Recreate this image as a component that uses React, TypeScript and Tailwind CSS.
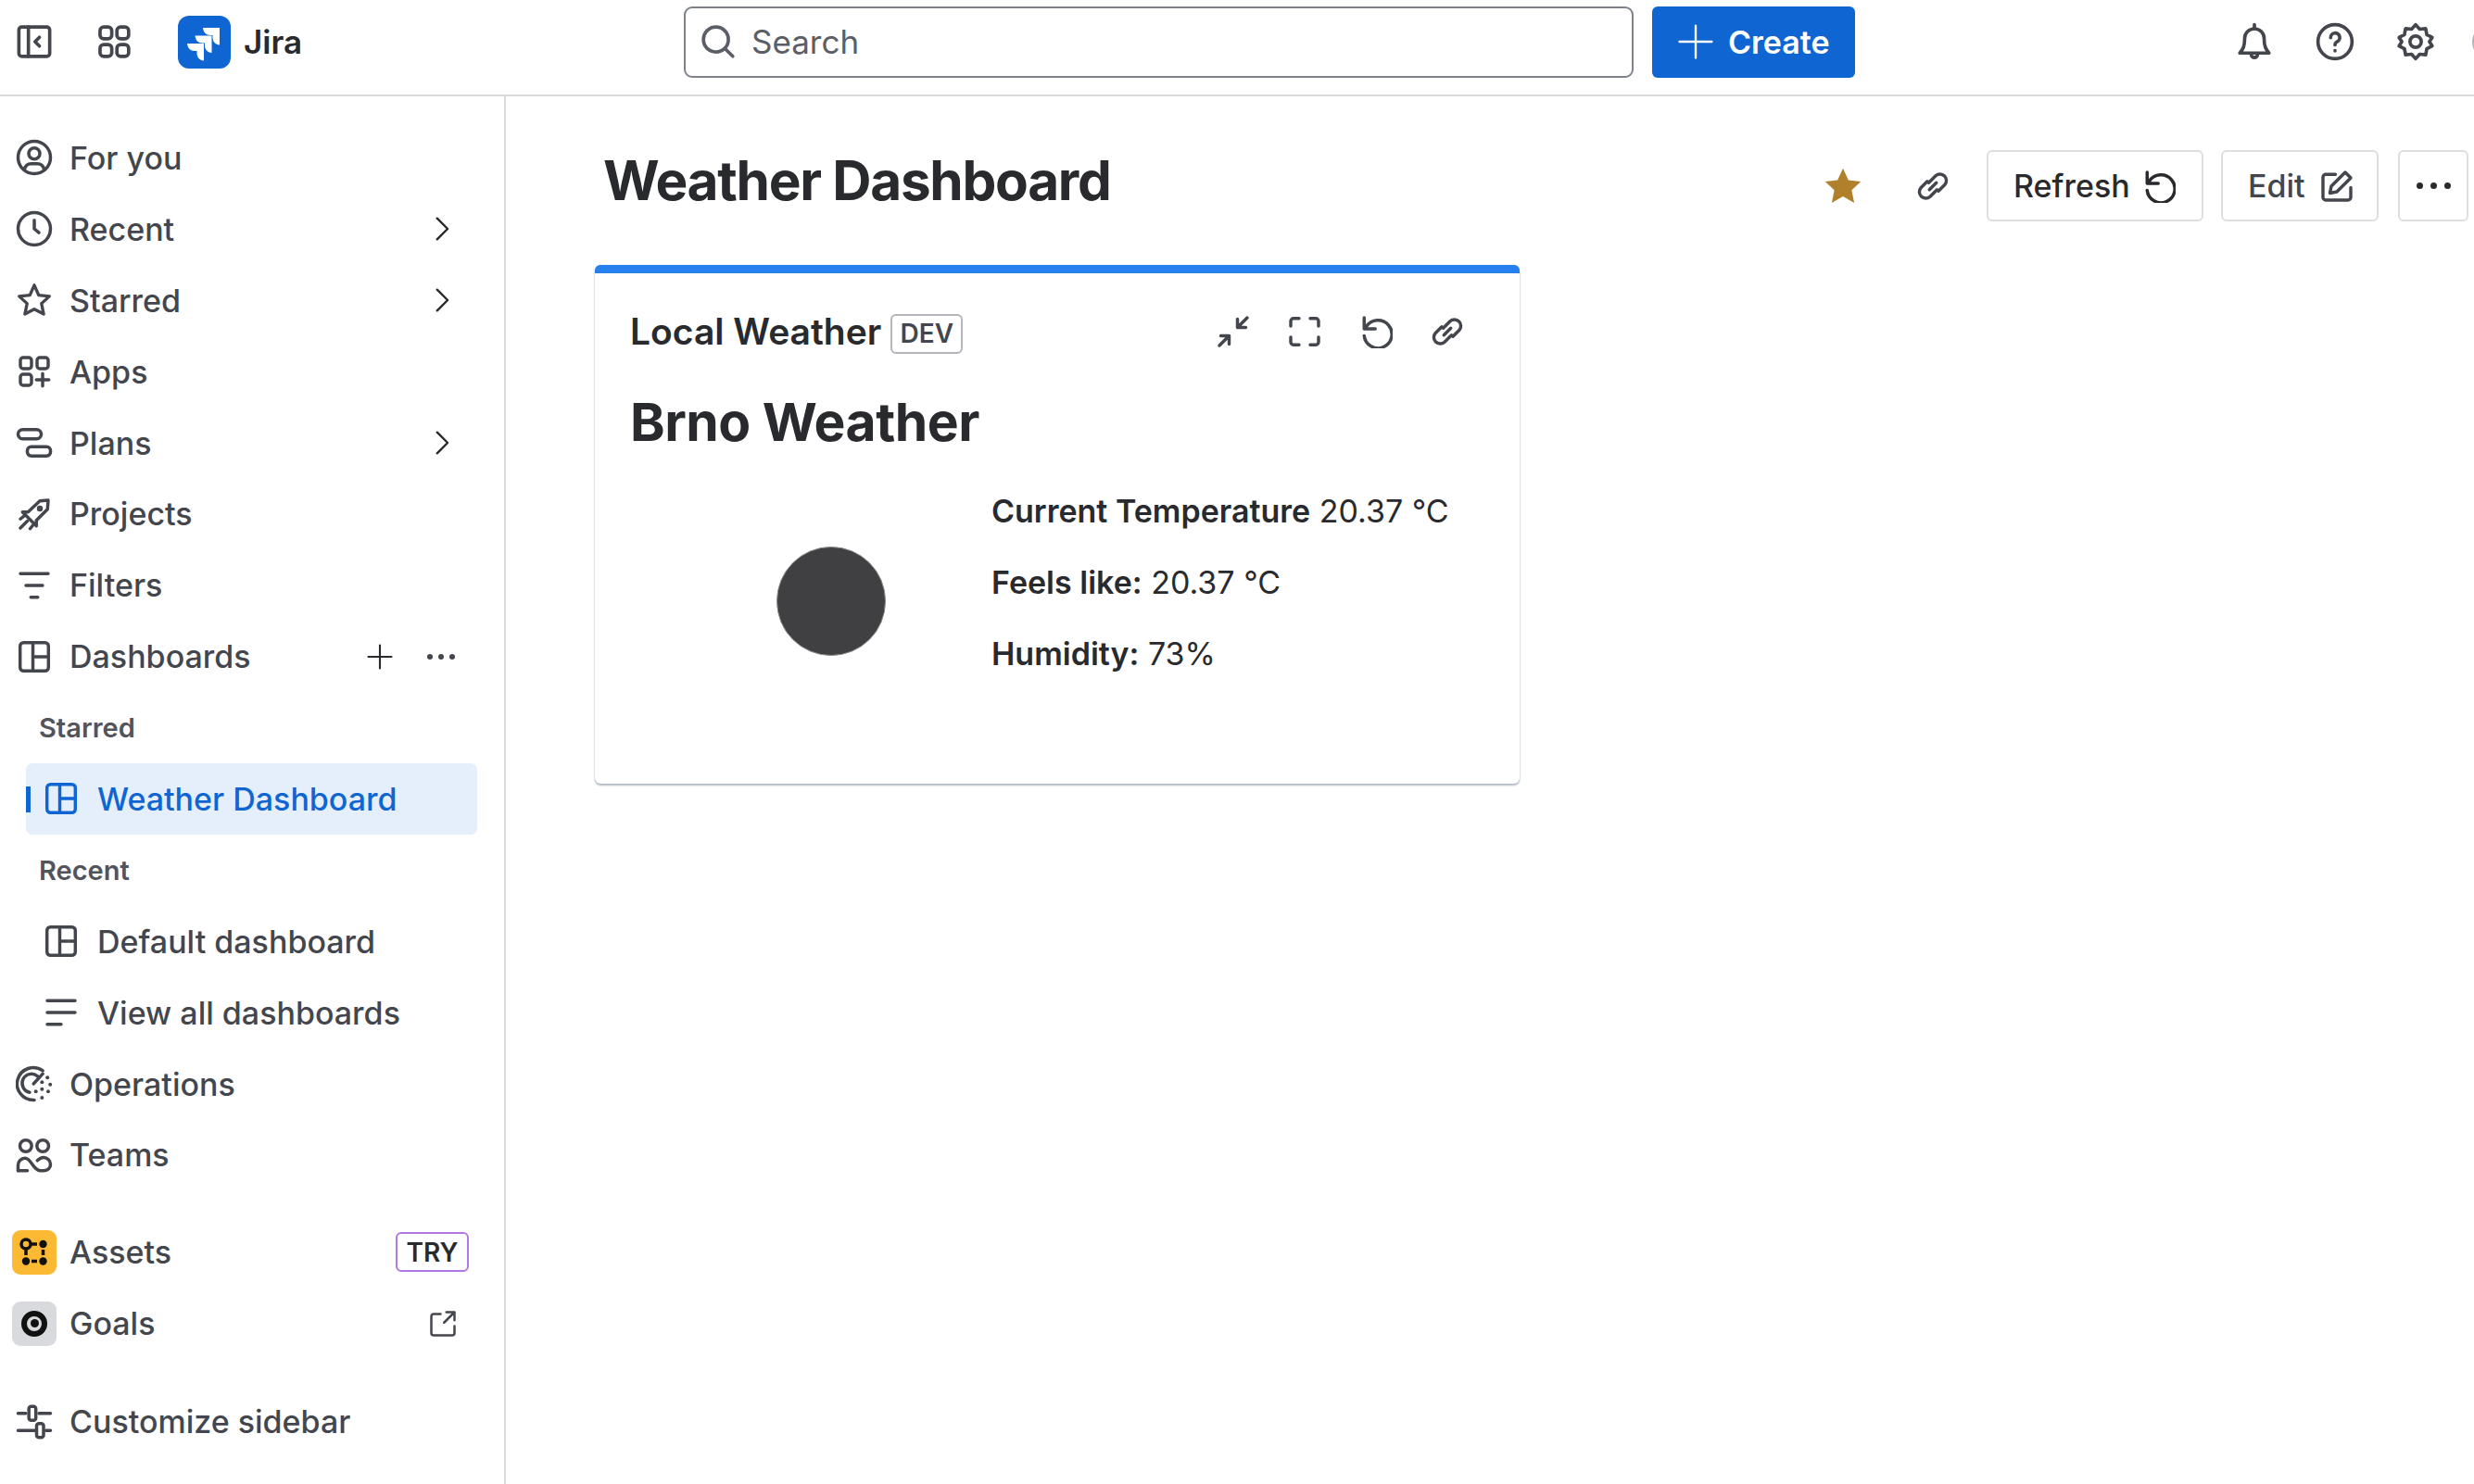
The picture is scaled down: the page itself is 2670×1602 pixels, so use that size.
import React from "react";

const I = ({ children, size = 36, vb = 24, sw = 2.3, className = "" }: { children: React.ReactNode; size?: number; vb?: number; sw?: number; className?: string }) => (
  <svg width={size} height={size} viewBox={`0 0 ${vb} ${vb}`} fill="none" stroke="currentColor" strokeWidth={sw} strokeLinecap="round" strokeLinejoin="round" className={`shrink-0 ${className}`}>
    {children}
  </svg>
);

const big = "-ml-[2px]";

const Chevron = () => (
  <I size={34} sw={1.7} className="text-[#292a2e]"><path d="M9 4l8 8-8 8" /></I>
);
const User = () => (
  <I size={40} sw={2.1} className={big}><circle cx="12" cy="12" r="10.500" /><circle cx="12" cy="9.500" r="3.600" /><path d="M5.500 20c.6-2.600 2.500-4 4.500-4h4c2 0 3.900 1.400 4.500 4" /></I>
);
const Clock = () => (
  <I size={40} sw={2.1} className={big}><circle cx="12" cy="12" r="10.500" /><path d="M12 6.500V12l3 2.500" /></I>
);
const Star = () => (
  <I size={38} sw={2.1} className="-ml-[1px]"><path d="M12 1.800l3 6.800 7.300.8-5.400 4.900 1.500 7.200L12 18.100l-6.400 3.400 1.500-7.200L1.700 9.400 9 8.600z" /></I>
);
const AppsI = () => (
  <I><rect x="2" y="2" width="8" height="8" rx="2" /><rect x="14" y="2" width="8" height="8" rx="2" /><rect x="2" y="14" width="8" height="8" rx="2" /><path d="M18 13.500v9M13.500 18h9" /></I>
);
const PlansI = () => (
  <I size={40} sw={2.1} className={big}><rect x="1.500" y="3.500" width="15" height="6" rx="3" /><rect x="7.500" y="14.500" width="15" height="6" rx="2.500" /></I>
);
const Rocket = () => (
  <I><path d="M22 2l-6 .5-8.500 8H3.500l3.500 3.500 3 3 3.500 3.500v-4l8-8z" /><circle cx="16" cy="8" r="1" /><path d="M2 22l5-5M2 15.500l2.500-2M9 22.500l2-2.500" /></I>
);
const FilterI = () => (
  <I><path d="M2 3.500h20M6 12h12M9.500 20.500h5" /></I>
);
const Board = () => (
  <I><rect x="1.800" y="1.800" width="20.400" height="20.400" rx="2.500" /><path d="M11 2v20M11 12h11" /></I>
);
const Lines = () => (
  <I><path d="M2 3.500h20M2 12h20M2 20.500h10" /></I>
);
const Ops = () => (
  <I size={40} sw={2.1} className={big}><path d="M17.500 3.500A10.500 10.500 0 1 0 12 22.500" /><path d="M14 7A6 6 0 1 0 9 17.500" /><path d="M17.500 5.500L11.500 12" />
    <g fill="currentColor" stroke="none"><circle cx="20.500" cy="8" r="1.200" /><circle cx="22.300" cy="12.500" r="1.200" /><circle cx="21" cy="17" r="1.200" /><circle cx="17" cy="21" r="1.200" /><circle cx="17" cy="11" r="1.200" /><circle cx="17" cy="15.500" r="1.200" /><circle cx="13" cy="17" r="1.200" /></g>
  </I>
);
const Teams = () => (
  <I size={40} sw={2.1} className={big}><circle cx="6.500" cy="6" r="3.800" /><circle cx="17.500" cy="6" r="3.800" /><path d="M1.500 22v-3.500a4.500 4.500 0 0 1 4.500-4.500c4 0 5 7.500 9.500 8h3a4 4 0 0 0 4-4 4.500 4.500 0 0 0-4.500-4.500c-2 0-3 1-4 2" /><path d="M1.500 22h6" /></I>
);
const Sliders = () => (
  <I size={40} sw={2.1} className={big}><path d="M1.500 6.500h5M15 6.500h7.500M1.500 17.500h11M19.500 17.500h3" /><rect x="8.500" y="2" width="4.500" height="9" rx="1.500" /><rect x="13.500" y="13" width="4.500" height="9" rx="1.500" /></I>
);
const LinkI = ({ size = 36 }: { size?: number }) => (
  <I size={size}><path d="M9 9.500l5-5a4.600 4.600 0 0 1 6.500 6.500L16 15.500" /><path d="M15 14.500l-5 5a4.600 4.600 0 0 1-6.500-6.500L8 8.500" /><path d="M9.500 14.500l5-5" /></I>
);
const Undo = ({ size = 36 }: { size?: number }) => (
  <I size={size}><path d="M3.500 2v8h8" /><path d="M5 8.500A10 10 0 1 1 3.500 15" /></I>
);

const rowBase = "flex items-center h-[76.9px] shrink-0";

const Row = ({ icon, label, right }: { icon: React.ReactNode; label: string; right?: React.ReactNode }) => (
  <div className={`${rowBase} pl-[19px] pr-[51px] text-[#44464e]`}>
    <span className="w-[56px] flex">{icon}</span>
    <span className="flex-1 font-medium">{label}</span>
    {right}
  </div>
);

const Heading = ({ label }: { label: string }) => (
  <div className={`${rowBase} pl-[42px] text-[29px] font-semibold text-[#52545c]`}>{label}</div>
);

const SubRow = ({ icon, label }: { icon: React.ReactNode; label: string }) => (
  <div className={`${rowBase} pl-[48px] text-[#44464e]`}>
    <span className="w-[57px] flex">{icon}</span>
    <span className="font-medium">{label}</span>
  </div>
);

export default function App() {
  return (
    <div className="w-[2670px] h-[1602px] overflow-hidden bg-white flex flex-col text-[#292a2e] text-[34px] font-['Inter',_'Liberation_Sans',_sans-serif]">
      <header className="h-[104px] shrink-0 border-b-2 border-[#d9d9d9] flex items-center">
        <div className="w-[738px] shrink-0 flex items-center pl-[18px] text-[#44464e] -mt-[12px]">
          <I size={38}><rect x="1.500" y="2" width="21" height="20" rx="2" /><path d="M8 2v20M15.500 9l-3 3 3 3" /></I>
          <span className="ml-[48px] flex">
            <I size={38}><rect x="2.500" y="2" width="8" height="8" rx="2.500" /><rect x="14" y="2" width="8" height="8" rx="2.500" /><rect x="2.500" y="14" width="8" height="8" rx="2.500" /><rect x="14" y="14" width="8" height="8" rx="2.500" /></I>
          </span>
          <span className="ml-[50px] w-[57px] h-[57px] rounded-[12px] bg-[#0f65d2] flex">
            <svg width="57" height="57" viewBox="0 0 57 57" fill="#ffffff">
              <path transform="translate(27 13)" d="M0 0H18V18.500C13.500 18 10.500 15 10.500 10.500V8H8C3.500 8 .5 5 0 0Z" />
              <path transform="translate(18.500 21.500)" d="M0 0H18V18.500C13.500 18 10.500 15 10.500 10.500V8H8C3.500 8 .5 5 0 0Z" />
              <path transform="translate(10 30)" d="M0 0H18V18.500C13.500 18 10.500 15 10.500 10.500V8H8C3.500 8 .5 5 0 0Z" />
            </svg>
          </span>
          <span className="ml-[14px] font-semibold text-[#292a2e] text-[35px]">Jira</span>
        </div>
        <div className="w-[1025px] h-[77px] shrink-0 border-2 border-[#7d818a] rounded-[9px] flex items-center pl-[16px] text-[#5b5e66] text-[35px] -mt-[12px]">
          <I size={38}><circle cx="10.500" cy="10.500" r="8.500" /><path d="M17 17l5 5" /></I>
          <span className="ml-[17px]">Search</span>
        </div>
        <div className="ml-[20px] w-[219px] h-[77px] shrink-0 bg-[#0f65d2] rounded-[6px] text-white flex items-center pl-[28px] font-semibold -mt-[12px]">
          <I size={38} sw={1.500}><path d="M12 1v22M1 12h22" /></I>
          <span className="ml-[16px]">Create</span>
        </div>
        <div className="ml-[410px] flex items-center gap-[45px] shrink-0 text-[#44464e] -mt-[12px]">
          <I size={42} sw={2.100}><path d="M6 10a6 6 0 0 1 12 0c0 5 1 6.500 3 9H3c2-2.500 3-4 3-9z" /><path d="M10 19.500c0 3 4 3 4 0M12 1.500V4" /></I>
          <I size={42} sw={2.100}><circle cx="12" cy="12" r="10.500" /><path d="M9.300 9.500a2.800 2.800 0 1 1 4 2.500c-.9.500-1.300 1-1.300 2" /><path d="M12 17.500v.1" /></I>
          <I size={42} sw={2.100}><path d="M12 1.500l2.500 2.800 3.700-.4.700 3.700 3.300 1.800-1.700 2.600 1.700 2.600-3.300 1.800-.7 3.700-3.700-.4L12 22.500l-2.500-2.800-3.700.4-.7-3.700-3.300-1.800L3.500 12l-1.700-2.600 3.300-1.800.7-3.700 3.700.4z" /><circle cx="12" cy="12" r="3.500" /></I>
          <span className="-ml-[5px] w-[40px] h-[40px] shrink-0 rounded-full border-2 border-[#b0b2b6]" />
        </div>
      </header>

      <div className="flex flex-1 min-h-0">
        <aside className="w-[546px] shrink-0 border-r-2 border-[#d9d9d9] pt-[28px] flex flex-col">
          <Row icon={<User />} label="For you" />
          <Row icon={<Clock />} label="Recent" right={<Chevron />} />
          <Row icon={<Star />} label="Starred" right={<Chevron />} />
          <Row icon={<AppsI />} label="Apps" />
          <Row icon={<PlansI />} label="Plans" right={<Chevron />} />
          <Row icon={<Rocket />} label="Projects" />
          <Row icon={<FilterI />} label="Filters" />
          <Row
            icon={<Board />}
            label="Dashboards"
            right={
              <span className="flex items-center gap-[36px] mr-[2px]">
                <I size={30} sw={1.700} className="text-[#292a2e]"><path d="M12 2v20M2 12h20" /></I>
                <span className="flex gap-[6px]">
                  <span className="w-[6px] h-[6px] rounded-full bg-[#44464e]" />
                  <span className="w-[6px] h-[6px] rounded-full bg-[#44464e]" />
                  <span className="w-[6px] h-[6px] rounded-full bg-[#44464e]" />
                </span>
              </span>
            }
          />
          <Heading label="Starred" />
          <div className={`${rowBase} ml-[28px] mr-[29px] pl-[20px] rounded-[7px] bg-[#e5effc] text-[#0f65d2] relative`}>
            <span className="absolute left-0 top-[25px] w-[5px] h-[28px] bg-[#0f65d2]" />
            <span className="w-[57px] flex"><Board /></span>
            <span className="font-medium">Weather Dashboard</span>
          </div>
          <Heading label="Recent" />
          <SubRow icon={<Board />} label="Default dashboard" />
          <SubRow icon={<Lines />} label="View all dashboards" />
          <Row icon={<Ops />} label="Operations" />
          <Row icon={<Teams />} label="Teams" />
          <div className="mt-[28px]">
            <div className={`${rowBase} pl-[13px] pr-[38px] text-[#44464e]`}>
              <span className="w-[48px] h-[48px] rounded-[9px] bg-[#fcb933] flex mr-[14px] shrink-0">
                <svg width="48" height="48" viewBox="0 0 48 48" fill="#111" stroke="#111" strokeWidth="3.500">
                  <circle cx="15" cy="15" r="5" fill="none" /><circle cx="33.500" cy="15" r="4.200" stroke="none" /><circle cx="15" cy="33.500" r="4.200" stroke="none" /><circle cx="33.500" cy="33.500" r="4.200" stroke="none" />
                  <path d="M20 15h7M15 20v7M21 33.500h6M33.500 21v6" />
                </svg>
              </span>
              <span className="flex-1 font-medium">Assets</span>
              <span className="w-[79px] h-[43px] border-2 border-[#af78e6] rounded-[6px] flex items-center justify-center text-[28px] font-semibold text-[#292a2e]">TRY</span>
            </div>
            <div className={`${rowBase} pl-[13px] pr-[51px] text-[#44464e]`}>
              <span className="w-[48px] h-[48px] rounded-[9px] bg-[#d9dadd] flex items-center justify-center mr-[14px] shrink-0">
                <span className="w-[28px] h-[28px] rounded-full border-[6px] border-[#111] flex items-center justify-center"><span className="w-[9px] h-[9px] rounded-full bg-[#111]" /></span>
              </span>
              <span className="flex-1 font-medium">Goals</span>
              <I size={30} sw={2}><path d="M10 3.500H4a2 2 0 0 0-2 2v14.500a2 2 0 0 0 2 2h16a2 2 0 0 0 2-2v-6" /><path d="M13 11l9-9M15 2h7v7" /></I>
            </div>
          </div>
          <div className="mt-[29px]">
            <Row icon={<Sliders />} label="Customize sidebar" />
          </div>
        </aside>

        <main className="flex-1 min-w-0 pl-[96px]">
          <div className="flex items-start h-[182px]">
            <h1 className="ml-[9px] mt-[55px] text-[58.500px] leading-[72px] font-bold tracking-[-1.300px] text-[#292a2e] w-[1316px] shrink-0">Weather Dashboard</h1>
            <div className="flex items-center mt-[58px]">
              <svg width="44" height="44" viewBox="0 0 24 24" fill="#b0802a" className="shrink-0"><path d="M12 1.500l3.200 7 7.300.8-5.400 5 1.500 7.500L12 18l-6.600 3.800L6.900 14.300l-5.400-5 7.300-.8z" /></svg>
              <span className="ml-[57px] text-[#44464e] flex"><LinkI /></span>
              <div className="ml-[40px] w-[234px] h-[77px] border-2 border-[#dddee1] rounded-[6px] flex items-center pl-[27px] font-medium text-[#292a2e]">
                Refresh<span className="ml-[13px] flex"><Undo /></span>
              </div>
              <div className="ml-[19px] w-[170px] h-[77px] border-2 border-[#dddee1] rounded-[6px] flex items-center pl-[27px] font-medium text-[#44464e]">
                Edit<span className="ml-[16px] flex"><I><path d="M11 3.500H4a2 2 0 0 0-2 2V20a2 2 0 0 0 2 2h16a2 2 0 0 0 2-2v-7" /><path d="M18 2l4 4L12 16l-5 1 1-5z" /></I></span>
              </div>
              <div className="ml-[21px] w-[76px] h-[77px] border-2 border-[#dddee1] rounded-[6px] flex items-center justify-center gap-[8px]">
                <span className="w-[7px] h-[7px] rounded-full bg-[#292a2e]" />
                <span className="w-[7px] h-[7px] rounded-full bg-[#292a2e]" />
                <span className="w-[7px] h-[7px] rounded-full bg-[#292a2e]" />
              </div>
            </div>
          </div>

          <section className="w-[998px] h-[560px] rounded-[6px] bg-white border-t-[9px] border-[#2680f0] shadow-[0_2px_2px_rgba(9,30,66,0.3),0_0_1px_rgba(9,30,66,0.35)] px-[38px]">
            <div className="flex items-center h-[70px] pt-[28px] box-content">
              <span className="font-semibold text-[39px] text-[#292a2e]">Local Weather</span>
              <span className="ml-[10px] w-[78px] h-[43px] border-2 border-[#b3b5ba] rounded-[6px] flex items-center justify-center text-[28px] font-semibold text-[#44464e] mt-[4px]">DEV</span>
              <span className="ml-auto mr-[22px] flex items-center gap-[41px] text-[#44464e]">
                <I><path d="M2 22l7-7M3 15h6v6M22 2l-7 7M21 9h-6V3" /></I>
                <I><path d="M8 2.500H4a2 2 0 0 0-2 2V8M16 2.500h4a2 2 0 0 1 2 2V8M8 21.500H4a2 2 0 0 1-2-2V16M16 21.500h4a2 2 0 0 0 2-2V16" /></I>
                <Undo />
                <LinkI />
              </span>
            </div>
            <h2 className="mt-[27px] text-[57px] leading-[72px] font-bold tracking-[-0.5px] text-[#292a2e]">Brno Weather</h2>
            <div className="flex mt-[34px]">
              <div className="w-[390px] shrink-0 flex pt-[64px] pl-[158px]">
                <span className="w-[118px] h-[118px] shrink-0 rounded-full bg-[#404042] border border-[#8a8a8c]" />
              </div>
              <div className="flex flex-col text-[#292a2e] text-[34px]">
                <p className="h-[77px]"><b className="font-semibold">Current Temperature</b> 20.37 °C</p>
                <p className="h-[77px]"><b className="font-semibold">Feels like:</b> 20.37 °C</p>
                <p className="h-[77px]"><b className="font-semibold">Humidity:</b> 73%</p>
              </div>
            </div>
          </section>
        </main>
      </div>
    </div>
  );
}
